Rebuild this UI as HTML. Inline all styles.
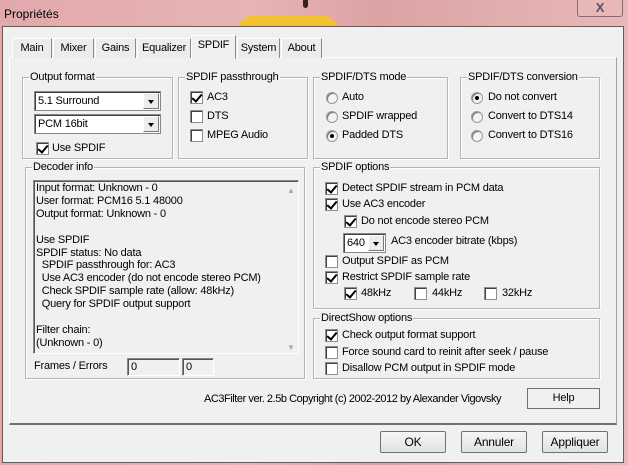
<!DOCTYPE html>
<html><head><meta charset="utf-8"><style>
*{margin:0;padding:0;box-sizing:border-box}
body{width:628px;height:465px;overflow:hidden;background:linear-gradient(90deg,#e2a9ab,#e7b4b5 40%,#dba3a4 60%,#e8b8b8);font-family:"Liberation Sans",sans-serif;font-size:11px;letter-spacing:-0.2px;color:#000;position:relative}
.a{position:absolute}
.t{position:absolute;white-space:nowrap;line-height:13px}
.body{left:2px;top:26px;width:622px;height:437px;background:#f0f0f0;border:1px solid #6b5a5a}
.panel{left:9px;top:57px;width:608px;height:368px;background:#f0f0f0;border:1px solid #fff;border-right-color:#a0a0a0;border-bottom:2px solid #707070}
.tab{position:absolute;top:38px;height:20px;background:#ececec;border:1px solid #fff;border-right-color:#8a8a8a;border-bottom:none;text-align:center;line-height:18px}
.grp{position:absolute;border:1px solid #b5b5b5;box-shadow:1px 1px 0 #fff inset,1px 1px 0 #fff}
.grp>span{position:absolute;top:-8px;left:6px;background:#f0f0f0;padding:0 1px;line-height:14px}
.cb{position:absolute;width:13px;height:13px;border:1px solid #8e8e8e;background:#fff;box-shadow:inset 1px 1px 0 #404040}
.cb.c::after{content:"";position:absolute;left:3px;top:0px;width:4px;height:8px;border:solid #000;border-width:0 2px 2px 0;transform:rotate(40deg)}
.rd{position:absolute;width:12px;height:12px;border-radius:50%;border:1px solid #9a9a9a;background:#f4f4f4;box-shadow:inset 1px 1px 0 #777}
.rd.c::after{content:"";position:absolute;left:3px;top:3px;width:4px;height:4px;border-radius:50%;background:#000}
.combo{position:absolute;height:20px;background:#fff;border:1px solid #888;box-shadow:inset 1px 1px 0 #404040;padding-left:3px;line-height:18px}
.combo b{position:absolute;right:1px;top:1px;width:16px;height:16px;background:#ececec;border:1px solid #fff;border-right-color:#777;border-bottom-color:#777}
.combo b::after{content:"";position:absolute;left:4px;top:6px;border:3.5px solid transparent;border-top:4px solid #000}
.btn{position:absolute;background:linear-gradient(#f6f6f6,#e2e2e2);border:1px solid #707070;border-radius:2px;text-align:center;font-size:12px}
.sunk{position:absolute;border:1px solid #888;border-right-color:#fff;border-bottom-color:#fff;box-shadow:inset 1px 1px 0 #555}
</style></head><body>
<div class="a" style="left:238px;top:16px;width:100px;height:14px;background:#f2c230;border-radius:50px 50px 0 0"></div>
<div class="a" style="left:303px;top:0;width:5px;height:8px;background:#3a2020;border-radius:0 0 3px 3px"></div>
<div class="t" style="left:4px;top:8px;font-size:12px;letter-spacing:0">Propriétés</div>
<div class="a" style="left:577px;top:-2px;width:46px;height:19px;border:1px solid #8a6a6a;border-radius:3px;background:#e8b8b9;text-align:center;font-weight:bold;color:#556;font-size:13px;line-height:17px">X</div>
<div class="a body"></div>
<div class="a panel"></div>
<div class="tab" style="left:12px;width:40px">Main</div>
<div class="tab" style="left:53px;width:41px">Mixer</div>
<div class="tab" style="left:95px;width:41px">Gains</div>
<div class="tab" style="left:137px;width:54px">Equalizer</div>
<div class="tab" style="left:191px;top:35px;height:24px;width:45px;background:#f0f0f0;z-index:2;line-height:18px">SPDIF</div>
<div class="tab" style="left:237px;width:43px">System</div>
<div class="tab" style="left:281px;width:41px">About</div>

<div class="grp" style="left:22px;top:77px;width:151px;height:82px"><span>Output format</span></div>
<div class="combo" style="left:34px;top:91px;width:127px">5.1 Surround<b></b></div>
<div class="combo" style="left:34px;top:114px;width:127px">PCM 16bit<b></b></div>
<div class="cb c" style="left:36px;top:142px"></div><div class="t" style="left:52px;top:142px">Use SPDIF</div>

<div class="grp" style="left:178px;top:77px;width:130px;height:82px"><span>SPDIF passthrough</span></div>
<div class="cb c" style="left:190px;top:91px"></div><div class="t" style="left:207px;top:91px">AC3</div>
<div class="cb" style="left:190px;top:110px"></div><div class="t" style="left:207px;top:110px">DTS</div>
<div class="cb" style="left:190px;top:129px"></div><div class="t" style="left:207px;top:129px">MPEG Audio</div>

<div class="grp" style="left:313px;top:77px;width:135px;height:82px"><span>SPDIF/DTS mode</span></div>
<div class="rd" style="left:326px;top:92px"></div><div class="t" style="left:342px;top:91px">Auto</div>
<div class="rd" style="left:326px;top:111px"></div><div class="t" style="left:342px;top:110px">SPDIF wrapped</div>
<div class="rd c" style="left:326px;top:130px"></div><div class="t" style="left:342px;top:129px">Padded DTS</div>

<div class="grp" style="left:460px;top:77px;width:140px;height:82px"><span>SPDIF/DTS conversion</span></div>
<div class="rd c" style="left:471px;top:92px"></div><div class="t" style="left:488px;top:91px">Do not convert</div>
<div class="rd" style="left:471px;top:111px"></div><div class="t" style="left:488px;top:110px">Convert to DTS14</div>
<div class="rd" style="left:471px;top:130px"></div><div class="t" style="left:488px;top:129px">Convert to DTS16</div>

<div class="grp" style="left:25px;top:167px;width:280px;height:212px"><span>Decoder info</span></div>
<div class="sunk" style="left:33px;top:180px;width:266px;height:174px;background:#f0f0f0"></div>
<div class="t" style="left:36px;top:182px;line-height:12.9px">Input format: Unknown - 0<br>User format: PCM16 5.1 48000<br>Output format: Unknown - 0<br><br>Use SPDIF<br>SPDIF status: No data<br>&nbsp;&nbsp;SPDIF passthrough for: AC3<br>&nbsp;&nbsp;Use AC3 encoder (do not encode stereo PCM)<br>&nbsp;&nbsp;Check SPDIF sample rate (allow: 48kHz)<br>&nbsp;&nbsp;Query for SPDIF output support<br><br>Filter chain:<br>(Unknown - 0)</div>
<div class="t" style="left:287px;top:184px;color:#aaa;font-size:8px">▲</div>
<div class="t" style="left:287px;top:341px;color:#aaa;font-size:8px">▼</div>
<div class="t" style="left:34px;top:360px">Frames / Errors</div>
<div class="sunk" style="left:127px;top:358px;width:53px;height:18px;padding:2px 3px">0</div>
<div class="sunk" style="left:182px;top:358px;width:32px;height:18px;padding:2px 3px">0</div>

<div class="grp" style="left:313px;top:167px;width:287px;height:142px"><span>SPDIF options</span></div>
<div class="cb c" style="left:325px;top:182px"></div><div class="t" style="left:342px;top:182px">Detect SPDIF stream in PCM data</div>
<div class="cb c" style="left:325px;top:198px"></div><div class="t" style="left:342px;top:198px">Use AC3 encoder</div>
<div class="cb c" style="left:344px;top:215px"></div><div class="t" style="left:361px;top:215px">Do not encode stereo PCM</div>
<div class="combo" style="left:343px;top:233px;width:43px">640<b></b></div><div class="t" style="left:391px;top:235px">AC3 encoder bitrate (kbps)</div>
<div class="cb" style="left:325px;top:255px"></div><div class="t" style="left:342px;top:255px">Output SPDIF as PCM</div>
<div class="cb c" style="left:325px;top:271px"></div><div class="t" style="left:342px;top:271px">Restrict SPDIF sample rate</div>
<div class="cb c" style="left:344px;top:287px"></div><div class="t" style="left:361px;top:287px">48kHz</div>
<div class="cb" style="left:414px;top:287px"></div><div class="t" style="left:432px;top:287px">44kHz</div>
<div class="cb" style="left:484px;top:287px"></div><div class="t" style="left:502px;top:287px">32kHz</div>

<div class="grp" style="left:313px;top:318px;width:287px;height:61px"><span>DirectShow options</span></div>
<div class="cb c" style="left:325px;top:329px"></div><div class="t" style="left:342px;top:329px">Check output format support</div>
<div class="cb" style="left:325px;top:346px"></div><div class="t" style="left:342px;top:346px">Force sound card to reinit after seek / pause</div>
<div class="cb" style="left:325px;top:362px"></div><div class="t" style="left:342px;top:362px">Disallow PCM output in SPDIF mode</div>

<div class="t" style="left:204px;top:393px;letter-spacing:-0.45px">AC3Filter ver. 2.5b Copyright (c) 2002-2012 by Alexander Vigovsky</div>
<div class="btn" style="left:527px;top:388px;width:73px;height:21px;border-radius:0;background:#f0f0f0;line-height:19px;font-size:11px">Help</div>

<div class="btn" style="left:380px;top:431px;width:66px;height:22px;line-height:20px">OK</div>
<div class="btn" style="left:461px;top:431px;width:66px;height:22px;line-height:20px">Annuler</div>
<div class="btn" style="left:542px;top:431px;width:66px;height:22px;line-height:20px">Appliquer</div>
</body></html>
